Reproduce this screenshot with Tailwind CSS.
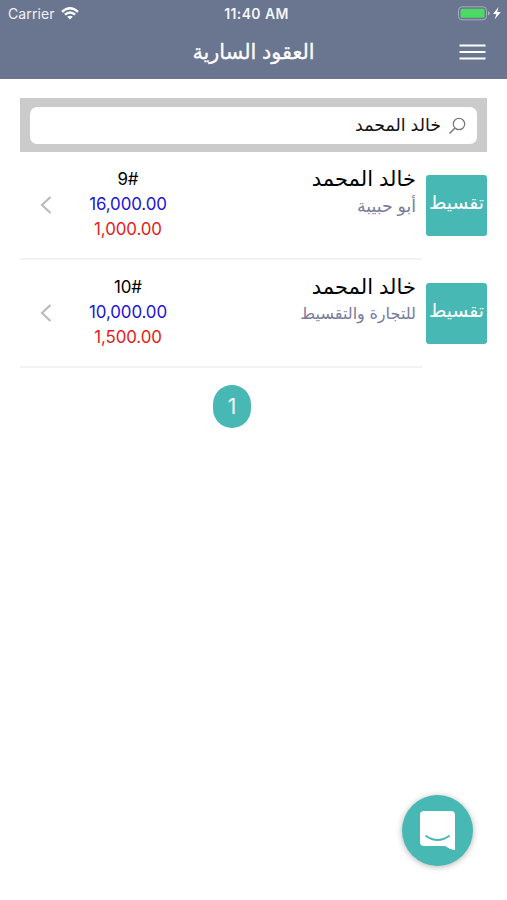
<!DOCTYPE html>
<html lang="ar">
<head>
<meta charset="utf-8">
<title>العقود السارية</title>
<script src="https://cdn.jsdelivr.net/npm/@tailwindcss/browser@4"></script>
</head>
<body class="relative flex h-[900px] w-[507px] flex-col overflow-hidden bg-white font-['Inter','DejaVu_Sans',sans-serif]">
<header class="h-[79px] shrink-0 bg-[#6a7590] text-white">
  <div class="grid h-[27px] grid-cols-3 items-center pr-[5px] pl-[8px]">
    <div class="flex items-center gap-[6px] text-[14px] tracking-[0.1px] text-white/90"><span>Carrier</span>
      <svg class="h-[13px] w-[18px]" viewBox="0 0 18 13" fill="none" stroke="#fff" stroke-width="2.3"><path d="M1 4.8Q9-2.3 17 4.8M3.9 7.7Q9 3.3 14.1 7.7"/><path d="M6.2 9.8Q9 7.6 11.8 9.8L9 12.6Z" fill="#fff" stroke="none"/></svg>
    </div>
    <div class="pl-[3px] text-center text-[14px] leading-[20px] font-semibold tracking-[0.4px] whitespace-nowrap text-white/95">11:40 AM</div>
    <svg class="mb-px h-[16px] w-[46px] justify-self-end" viewBox="0 0 46 16"><rect x="2.5" y="1.8" width="28" height="13" rx="3.5" fill="none" stroke="#a5adbb"/><rect x="4.5" y="3.8" width="24" height="9" rx="1.5" fill="#4cd964"/><path d="M32 6v4.5q2-.7 2-2.2T32 6" fill="#a5adbb"/><path d="M42.500 2 37 9h3.400l-1.800 5.500 6.200-7.500h-3.600z" fill="#fff"/></svg>
  </div>
  <div class="grid h-[52px] grid-cols-[1fr_auto_1fr] items-center pr-[21px] pb-[2px] pl-[21px]">
    <span></span>
    <h1 dir="rtl" class="text-[20.8px] font-medium whitespace-nowrap [-webkit-text-stroke:0.3px_white]">العقود السارية</h1>
    <svg class="h-[18px] w-[27px] justify-self-end" viewBox="0 0 27 18" stroke="#fff" stroke-width="2"><path d="M.5 2.500h26M.5 9h26M.5 15.500h26"/></svg>
  </div>
</header>
<main class="px-[20px] pt-[19px]" dir="rtl">
  <div class="h-[54px] w-[467px] bg-[#cbcbcb] px-[10px] py-[9px]">
    <div class="flex h-[37px] items-center gap-[7px] rounded-[7px] bg-white pr-[11px] text-[17.4px] text-[#111]">
      <svg class="h-[18px] w-[18px]" viewBox="0 0 18 18" fill="none" stroke="#777" stroke-width="1.2"><circle cx="11" cy="7" r="5.7"/><path d="M7 11 1.500 16.500" stroke-width="1.5"/></svg>
      <span class="whitespace-nowrap">خالد المحمد</span>
    </div>
  </div>
  <article class="flex h-[108px]">
    <div class="mt-[23px] flex h-[61px] w-[61px] shrink-0 items-center justify-center rounded-[3px] bg-[#48b8b5] pb-[5px] text-[18.8px] whitespace-nowrap text-white">تقسيط</div>
    <div class="mr-[4px] flex w-[402px] border-b-2 border-[#f3f3f3]">
      <div class="mr-[6px] flex-1 pt-[13px]"><h2 class="h-[27px] text-[21.1px] leading-[27px] text-black">خالد المحمد</h2><p class="text-[17.3px] leading-[27px] text-[#777d9b]">أبو حبيبة</p></div>
      <div class="flex w-[110px] flex-col pt-[15px] text-center text-[16.9px] leading-[25px] tracking-[-0.1px]" dir="ltr"><span class="text-black">9#</span><span class="text-[#1b13d8]">16,000.00</span><span class="text-[#e51b1b]">1,000.00</span></div>
      <div class="flex w-[53px] items-center pr-[21px]"><svg class="h-[18px] w-[12px]" viewBox="0 0 12 18" fill="none" stroke="#bbb" stroke-width="2.2"><path d="M10.500 1 2 9l8.500 8"/></svg></div>
    </div>
  </article>
  <article class="flex h-[108px]">
    <div class="mt-[23px] flex h-[61px] w-[61px] shrink-0 items-center justify-center rounded-[3px] bg-[#48b8b5] pb-[5px] text-[18.8px] whitespace-nowrap text-white">تقسيط</div>
    <div class="mr-[4px] flex w-[402px] border-b-2 border-[#f3f3f3]">
      <div class="mr-[6px] flex-1 pt-[13px]"><h2 class="h-[27px] text-[21.1px] leading-[27px] text-black">خالد المحمد</h2><p class="text-[16.1px] leading-[27px] text-[#777d9b]">للتجارة والتقسيط</p></div>
      <div class="flex w-[110px] flex-col pt-[15px] text-center text-[16.9px] leading-[25px] tracking-[-0.1px]" dir="ltr"><span class="text-black">10#</span><span class="text-[#1b13d8]">10,000.00</span><span class="text-[#e51b1b]">1,500.00</span></div>
      <div class="flex w-[53px] items-center pr-[21px]"><svg class="h-[18px] w-[12px]" viewBox="0 0 12 18" fill="none" stroke="#bbb" stroke-width="2.2"><path d="M10.500 1 2 9l8.500 8"/></svg></div>
    </div>
  </article>
  <nav class="mt-[17px] flex pr-[236px]"><span class="flex h-[43px] w-[38px] items-center justify-center rounded-[19px] bg-[#48b8b5] text-[21px] text-white">1</span></nav>
</main>
<button class="absolute top-[795px] left-[402px] flex h-[71px] w-[71px] items-center justify-center rounded-full bg-[#48b8b5] shadow-[0_1px_6px_rgba(0,0,0,0.3)]">
  <svg class="h-[39px] w-[35px]" viewBox="0 0 35 39"><path d="M4 0h27q4 0 4 4v35q-6-1-10-4H4q-4 0-4-4V4Q0 0 4 0Z" fill="#fff"/><path d="M6 25q11.500 8 23 0" fill="none" stroke="#48b8b5" stroke-width="2" stroke-linecap="round"/></svg>
</button>
</body>
</html>
